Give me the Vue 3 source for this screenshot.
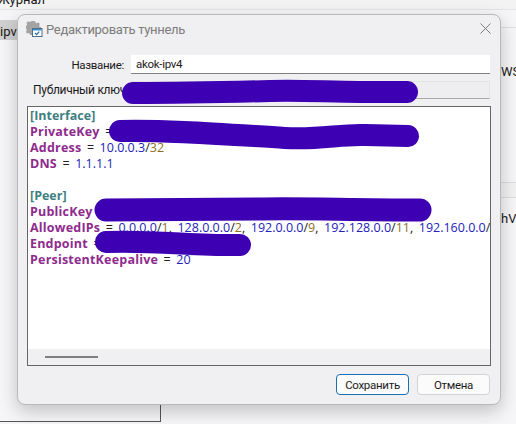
<script setup>
const allowed = [
  ['0.0.0.0', '1'], ['128.0.0.0', '2'], ['192.0.0.0', '9'], ['192.128.0.0', '11'],
  ['192.160.0.0', '13'], ['192.168.0.0', '16']
]
</script>

<template>
  <div class="desk">
    <div class="menubar"><span class="menu">Журнал</span></div>
    <div class="backdrop">
      <div class="list"><div class="sel">ipv4</div></div>
      <div class="side">
        <div class="side-a">WS</div>
        <div class="side-line"></div>
        <div class="side-b">hV</div>
      </div>
    </div>
    <div class="frame"></div>

    <div class="dialog">
      <header class="title">
        <svg class="ticon" width="17" height="16" viewBox="0 0 17 16">
          <path d="M6 0 h3 l.4 1.6 1.4.6 1.4-.9 1.8 1.8 -.9 1.4 .5 1.2 1.4.4 v2 H6 v6 H4 l-.4-1.5 -1.3-.6 -1.4.8 L0 10.6 l.8-1.4 -.5-1.3 L-.5 7.5 V5 l1.2-.4 .5-1.3 -.8-1.4 1.6-1.6 1.4.8 1.3-.5z" fill="#a3a3a3"/>
          <rect x="6.5" y="7.5" width="9.5" height="8" fill="#fff" stroke="#4a6f8c"/>
          <rect x="7" y="8" width="8.5" height="1.5" fill="#3b8fc4"/>
          <path d="M9 12 l1.6 1.6 l2.6-3" fill="none" stroke="#2b6fa8" stroke-width="1.3"/>
        </svg>
        <span class="ttext">Редактировать туннель</span>
        <svg class="close" width="11" height="11" viewBox="0 0 11 11"><path d="M.5.5 l10 10 M10.5.5 l-10 10" stroke="#7b7b7b" stroke-width="1" fill="none"/></svg>
      </header>

      <div class="row">
        <label class="lab">Название:</label>
        <div class="input">akok-ipv4</div>
      </div>
      <div class="row row2">
        <label class="lab lab2">Публичный ключ:</label>
        <div class="input ro"></div>
      </div>

      <div class="editor">
        <div class="code">
          <div class="sec">[Interface]</div>
          <div><b>PrivateKey</b> = </div>
          <div><b>Address</b> = <i>10.0.0.3</i>/<u>32</u></div>
          <div><b>DNS</b> = <i>1.1.1.1</i></div>
          <div class="blank"></div>
          <div class="sec">[Peer]</div>
          <div><b>PublicKey</b> = </div>
          <div><b>AllowedIPs</b> = <template v-for="(a, n) in allowed" :key="n"><i>{{ a[0] }}</i>/<u>{{ a[1] }}</u>, </template></div>
          <div><b>Endpoint</b> = </div>
          <div><b>PersistentKeepalive</b> = <i>20</i></div>
        </div>
        <div class="hbar"><div class="thumb"></div></div>
      </div>

      <footer class="btns">
        <button class="btn primary">Сохранить</button>
        <button class="btn">Отмена</button>
      </footer>
    </div>

    <svg class="ink" width="516" height="424" viewBox="0 0 516 424">
      <g fill="none" stroke="#3d00b3" stroke-linecap="round" stroke-linejoin="round">
        <path stroke-width="22" d="M133 93 C180 93 230 92 270 91 C300 90 330 92 360 92 L407 92"/>
        <path stroke-width="22" d="M120 131 C170 130 220 134 285 138 C320 140 340 134 365 135 L408 136"/>
        <path stroke-width="23" d="M106 210 C160 210 210 209 258 209 C300 208 350 210 420 210"/>
        <path stroke-width="22" d="M106 242 C150 240 200 246 240 245"/>
      </g>
    </svg>
  </div>
</template>

<style scoped>
.desk {
  position: relative;
  width: 516px;
  height: 424px;
  overflow: hidden;
  background: #f6f5f7;
  font-family: Roboto, "Noto Sans", sans-serif;
  color: #1a1a1a;
}
.menubar {
  position: relative;
  height: 9px;
  background: #f3f3f3;
  border-bottom: 1px solid #e3e3e3;
  overflow: hidden;
}
.menu {
  position: absolute;
  left: -2px;
  bottom: 3px;
  font-size: 13px;
  line-height: 13px;
}
.backdrop {
  display: flex;
  justify-content: space-between;
  padding-top: 10px;
}
.list { width: 17px; overflow: hidden; }
.sel {
  height: 20px;
  background: #d0d0d0;
  font-size: 13px;
  line-height: 24px;
  white-space: nowrap;
}
.side {
  width: 15px;
  border-top: 1px solid #dedede;
  overflow: hidden;
  font-size: 13px;
  margin-top: 7px;
  white-space: nowrap;
}
.side-a { margin-top: 36px; line-height: 16px; }
.side-line {
  height: 14px;
  margin-top: 102px;
  border-top: 1px solid #dcdcdc;
  border-bottom: 1px solid #dcdcdc;
  background: #f2f2f2;
}
.side-b { margin-top: 13px; line-height: 16px; }
.frame {
  position: absolute;
  left: 0;
  top: 390px;
  width: 160px;
  height: 31px;
  border-right: 1px solid #555;
  border-bottom: 1px solid #555;
}
.dialog {
  position: absolute;
  left: 17px;
  top: 14px;
  width: 484px;
  height: 391px;
  box-sizing: border-box;
  display: flex;
  flex-direction: column;
  padding: 0 9px 10px 9px;
  background: #f0eff1;
  border: 1px solid #b9b9b9;
  border-radius: 8px;
  box-shadow: 0 6px 18px rgba(0, 0, 0, 0.22);
}
.title {
  display: flex;
  align-items: center;
  height: 28px;
  flex: none;
}
.ticon { margin-left: -1px; }
.ttext { margin-left: 3px; font-size: 13px; letter-spacing: -0.3px; color: #7c7c7c; }
.close { margin-left: auto; margin-right: 0; margin-top: -2px; }
.row {
  display: flex;
  align-items: center;
  margin-top: 12px;
  height: 19px;
  flex: none;
}
.row2 { margin-top: 7px; height: 18px; }
.lab {
  width: 97px;
  text-align: right;
  font-size: 11.5px;
  letter-spacing: -0.3px;
  flex: none;
}
.lab2 { text-align: left; margin-left: 6px; width: 91px; white-space: nowrap; font-size: 12px; }
.input {
  flex: 1;
  height: 100%;
  box-sizing: border-box;
  margin-left: 7px;
  margin-right: 1px;
  padding-left: 5px;
  background: #fff;
  border-bottom: 1px solid #808080;
  font-size: 11.5px;
  letter-spacing: -0.3px;
  line-height: 18px;
}
.ro { background: #eeedef; border: 1px solid #e4e4e4; border-bottom-color: #a8a8a8; }
.editor {
  margin-top: 7px;
  height: 260px;
  flex: none;
  box-sizing: border-box;
  border: 1px solid #666;
  background: #fff;
  display: flex;
  flex-direction: column;
  overflow: hidden;
}
.code {
  flex: 1;
  min-height: 0;
  padding: 1px 0 0 2px;
  font-family: "Open Sans", "Noto Sans", sans-serif;
  font-size: 12.5px;
  line-height: 16px;
  word-spacing: 2.3px;
  color: #222;
  white-space: nowrap;
  overflow: hidden;
}
.code b { color: #8e2c8e; font-weight: 700; letter-spacing: 0.2px; }
.code i { color: #2222bb; font-style: normal; }
.code u { color: #8f6f1f; text-decoration: none; }
.sec { color: #3f7f7f; font-weight: 700; }
.blank { height: 16px; }
.hbar {
  flex: none;
  height: 16px;
  background: #f0eff1;
  display: flex;
  align-items: center;
  padding-left: 17px;
}
.thumb { width: 53px; height: 2px; background: #808080; }
.btns {
  display: flex;
  justify-content: flex-end;
  gap: 8px;
  margin-top: 8px;
  margin-right: 1px;
}
.btn {
  width: 73px;
  height: 21px;
  box-sizing: border-box;
  padding: 0;
  border: 1px solid #d3d3d3;
  border-radius: 4px;
  background: #fbfbfb;
  font-family: inherit;
  font-size: 11.5px;
  letter-spacing: -0.3px;
  color: #1a1a1a;
}
.primary { border-color: #1a6fb0; }
.ink { position: absolute; left: 0; top: 0; pointer-events: none; }
</style>
